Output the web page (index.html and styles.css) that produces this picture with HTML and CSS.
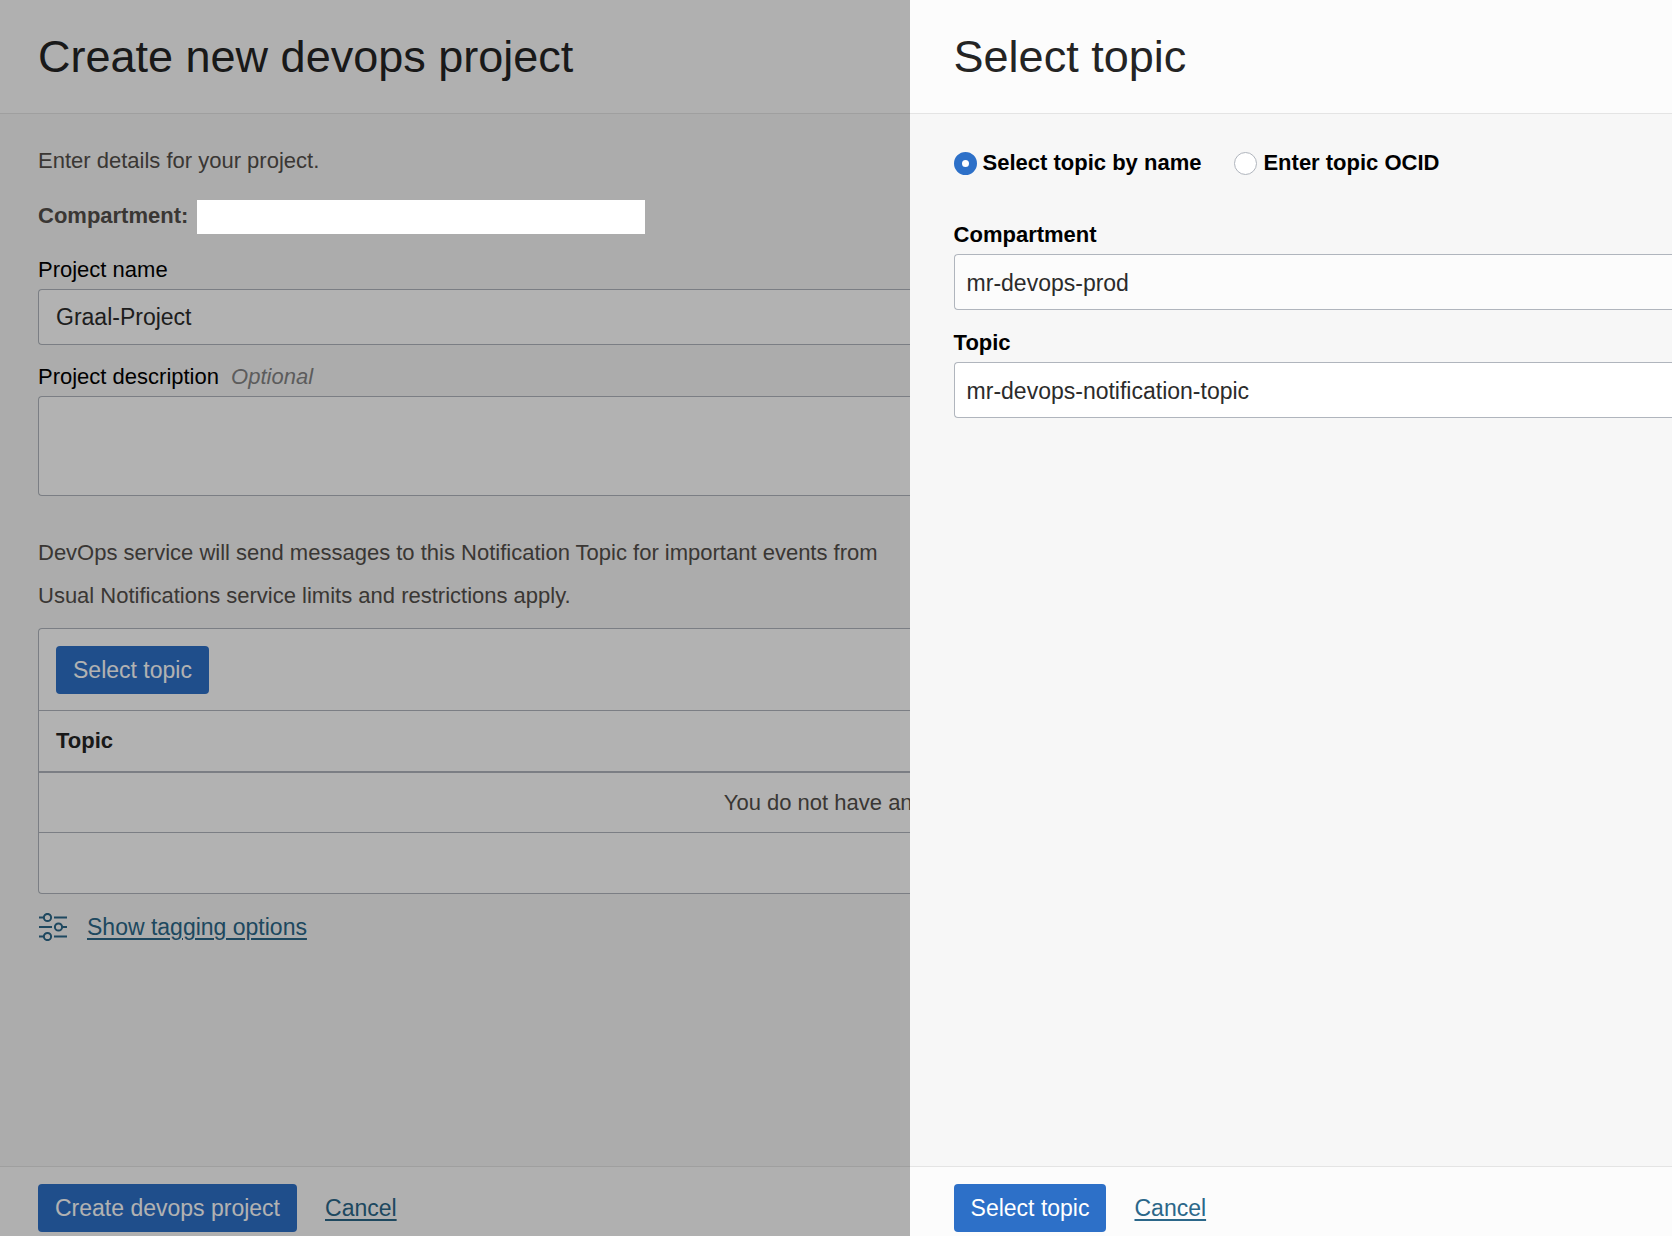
FILE: index.html
```html
<!DOCTYPE html>
<html lang="en">
<head>
<meta charset="utf-8">
<meta name="viewport" content="width=device-width, initial-scale=1">
<title>Create new devops project</title>
<link rel="stylesheet" href="styles.css">
</head>
<body>
<main class="sheet">
  <header class="bar bar-top"><h1 class="title">Create new devops project</h1></header>
  <form class="content" id="project-form">
    <p class="intro">Enter details for your project.</p>
    <div class="compartment">
      <strong>Compartment:</strong>
      <span class="redacted"></span>
    </div>
    <div class="field">
      <label class="label" for="name">Project name</label>
      <input class="control" id="name" type="text" value="Graal-Project">
    </div>
    <div class="field">
      <label class="label" for="description">Project description <em class="optional">Optional</em></label>
      <textarea class="control control-area" id="description"></textarea>
    </div>
    <p class="note">DevOps service will send messages to this Notification Topic for important events from<br>Usual Notifications service limits and restrictions apply.</p>
    <section class="topics">
      <div class="toolbar"><button class="button" type="button">Select topic</button></div>
      <table class="table">
        <thead><tr><th scope="col">Topic</th></tr></thead>
        <tbody><tr><td>You do not have any topics</td></tr></tbody>
        <tfoot><tr><td></td></tr></tfoot>
      </table>
    </section>
    <div class="tagging">
      <svg class="tagging-icon" viewBox="0 0 28 28" aria-hidden="true">
        <path d="M0 4.500h5M15 4.500h13M0 14h13M24 14h4M0 23.500h5M15 23.500h13"/>
        <circle cx="8.500" cy="4.500" r="3.600"/>
        <circle cx="19.500" cy="14" r="3.600"/>
        <circle cx="8.500" cy="23.500" r="3.600"/>
      </svg>
      <a class="link" href="#tagging">Show tagging options</a>
    </div>
  </form>
  <footer class="bar bar-bottom">
    <button class="button" type="submit" form="project-form">Create devops project</button>
    <a class="link" href="#cancel">Cancel</a>
  </footer>
</main>
<div class="backdrop">
  <aside class="panel" role="dialog" aria-labelledby="panel-title">
    <header class="bar bar-top"><h2 class="title" id="panel-title">Select topic</h2></header>
    <form class="content" id="topic-form">
      <div class="choices">
        <label class="choice"><input class="radio" type="radio" name="mode" checked>Select topic by name</label>
        <label class="choice"><input class="radio" type="radio" name="mode">Enter topic OCID</label>
      </div>
      <div class="field">
        <label class="label" for="compartment">Compartment</label>
        <select class="control control-muted" id="compartment"><option>mr-devops-prod</option></select>
      </div>
      <div class="field">
        <label class="label" for="topic">Topic</label>
        <select class="control" id="topic"><option>mr-devops-notification-topic</option></select>
      </div>
    </form>
    <footer class="bar bar-bottom">
      <button class="button" type="submit" form="topic-form">Select topic</button>
      <a class="link" href="#close">Cancel</a>
    </footer>
  </aside>
</div>
</body>
</html>
```
FILE: styles.css
```css
* { box-sizing: border-box; }

body {
  margin: 0;
  overflow: hidden;
  background: #f7f7f7;
  color: #534f4b;
  font: 22px/28px "Liberation Sans", Arial, sans-serif;
}

.sheet,
.panel {
  display: flex;
  flex-direction: column;
  min-height: 100vh;
  background: #f7f7f7;
}

.bar {
  display: flex;
  align-items: center;
  background: #fcfcfc;
  padding-left: 38px;
}

.bar-top {
  height: 114px;
  border-bottom: 1px solid #e4e4e4;
}

.bar-bottom {
  gap: 28px;
  padding-top: 17px;
  padding-bottom: 4px;
  border-top: 1px solid #e4e4e4;
}

.title {
  margin: 0;
  color: #242424;
  font-size: 45px;
  font-weight: 400;
  line-height: 56px;
}

.content {
  flex: 1;
  padding: 33px 0 0 38px;
}

.intro { margin: 0 0 25px; }

.compartment {
  display: flex;
  align-items: flex-start;
  gap: 9px;
  height: 34px;
  margin-bottom: 22px;
  line-height: 32px;
}

.redacted {
  position: relative;
  z-index: 2;
  width: 448px;
  height: 34px;
  background: #fff;
}

.field {
  display: flex;
  flex-direction: column;
  gap: 5px;
  margin-bottom: 18px;
}

.label { color: #000; }

.optional {
  margin-left: 6px;
  color: #858585;
}

.control {
  width: 100%;
  height: 56px;
  margin: 0;
  padding: 0 17px;
  border: 1px solid #b0b5bd;
  border-right: 0;
  border-radius: 4px 0 0 4px;
  appearance: none;
  background: #fff;
  color: #2b2b2b;
  font: inherit;
  font-size: 23px;
}

.control-area {
  height: 100px;
  padding: 12px 17px;
  resize: none;
}

.note {
  margin: 35px 0 11px;
  line-height: 43px;
}

.topics {
  border: 1px solid #b0b5bd;
  border-right: 0;
  border-radius: 4px 0 0 4px;
  background: #fff;
}

.toolbar { padding: 17px 17px 16px; }

.table {
  width: 100%;
  border-collapse: separate;
  border-spacing: 0;
}

.table th,
.table td {
  height: 61px;
  padding: 0 17px;
  border-top: 1px solid #b0b5bd;
}

.table th {
  color: #242424;
  text-align: left;
}

.table td { text-align: center; }
.table tbody td { border-top-width: 2px; }

.button {
  height: 48px;
  padding: 0 17px;
  border: 0;
  border-radius: 4px;
  background: #2d70c8;
  color: #fff;
  font: inherit;
  font-size: 23px;
}

.link {
  color: #2b6789;
  font-size: 23px;
  text-decoration: underline;
  text-decoration-thickness: 2px;
  text-underline-offset: 3px;
}

.tagging {
  display: flex;
  align-items: center;
  gap: 20px;
  margin-top: 19px;
  padding-left: 1px;
}

.tagging-icon {
  width: 28px;
  height: 28px;
  fill: none;
  stroke: #2b6789;
  stroke-width: 2;
}

.backdrop {
  position: fixed;
  inset: 0;
  z-index: 1;
  display: flex;
  justify-content: flex-end;
  background: rgba(0, 0, 0, 0.3);
}

.panel {
  position: relative;
  z-index: 3;
  width: 45.6%;
}

.panel .bar { padding-left: 44px; }
.panel .content { padding: 35px 0 0 44px; }
.panel .label { font-weight: 700; }
.panel .field { margin-bottom: 19px; }
.panel .control { padding: 2px 12px 0; }
.panel .control-muted { background: #fcfcfc; }

.choices {
  display: flex;
  gap: 33px;
  margin-bottom: 44px;
}

.choice {
  display: flex;
  align-items: center;
  gap: 6px;
  color: #000;
  font-weight: 700;
}

.radio {
  width: 23px;
  height: 23px;
  margin: 0;
  border: 1px solid #b0b5bd;
  border-radius: 50%;
  appearance: none;
  background: #fff;
}

.radio:checked {
  border: 8px solid #2d70c8;
}
```
